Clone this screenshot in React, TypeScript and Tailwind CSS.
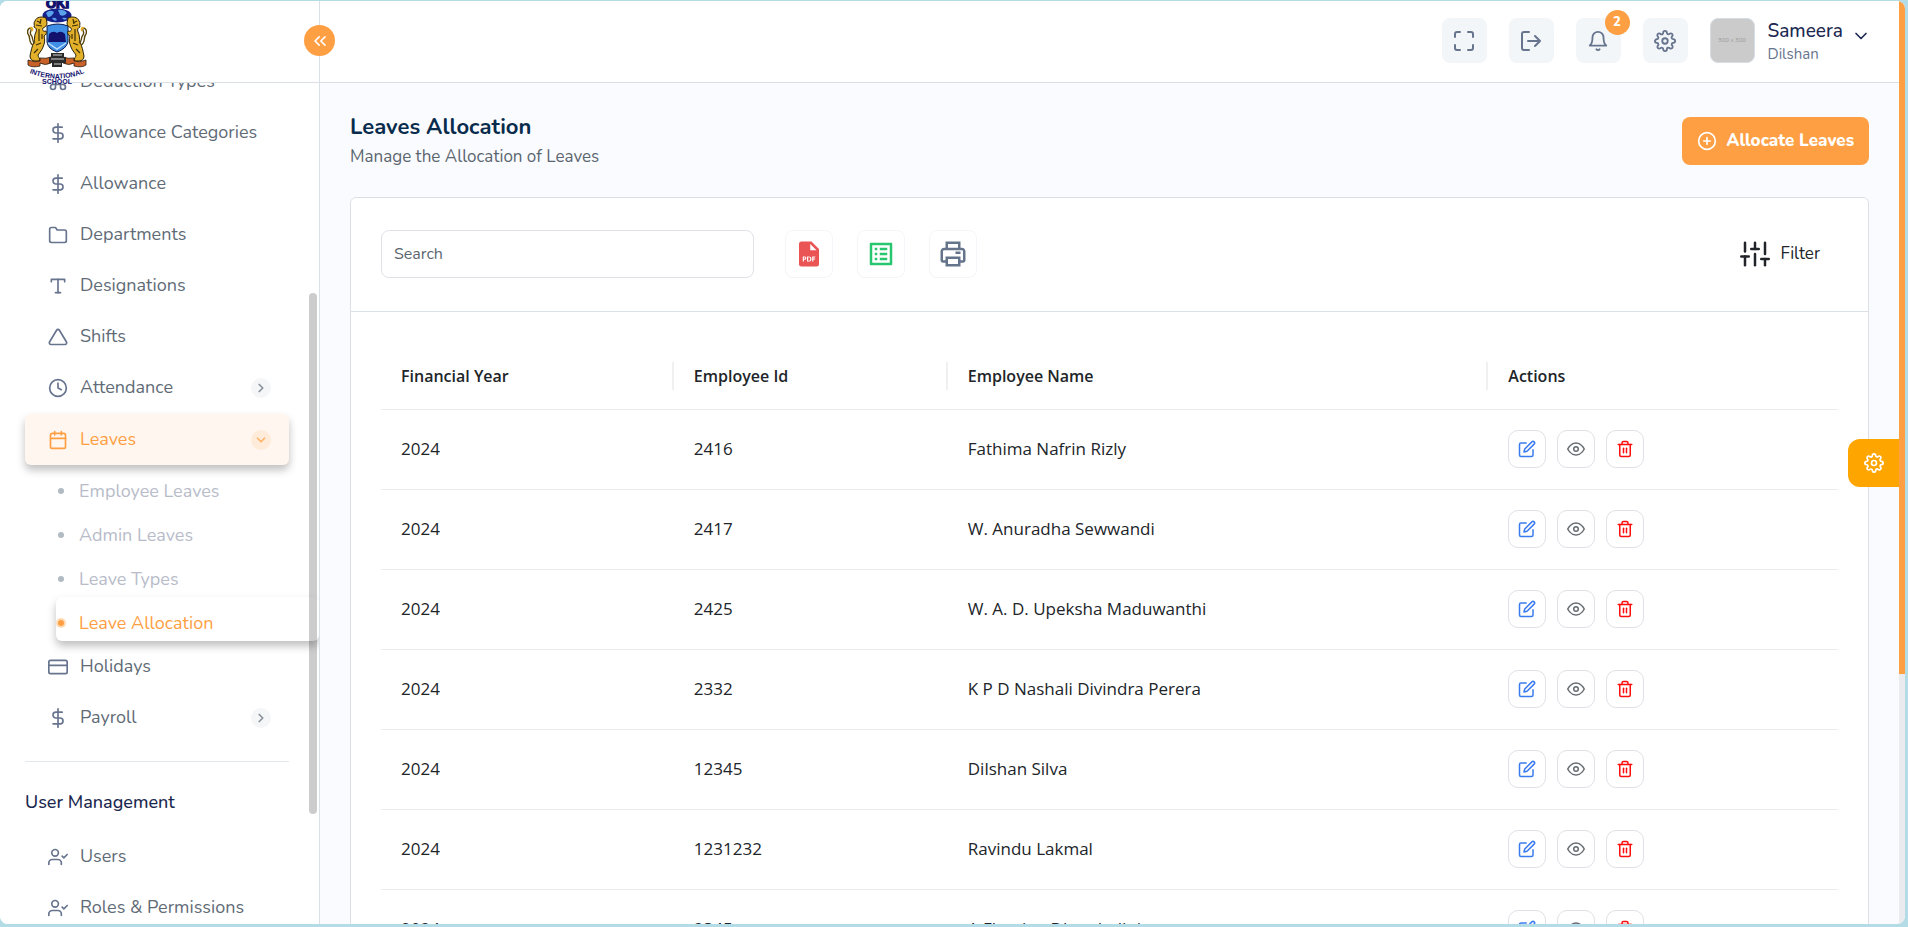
import React from "react";
import {
  FiBell, FiCalendar, FiChevronDown, FiChevronRight, FiChevronsLeft, FiClock, FiCommand, FiCreditCard,
  FiDollarSign, FiEdit, FiEye, FiFolder, FiPlusCircle, FiSettings, FiSliders, FiTrash2, FiTriangle, FiType,
  FiUserCheck,
} from "react-icons/fi";
import { BiPrinter, BiSolidFilePdf } from "react-icons/bi";
import { MdOutlineListAlt } from "react-icons/md";
import type { IconType } from "react-icons";

type NavItem = { label: string; icon: IconType; chevron?: boolean };

const topItems: NavItem[] = [
  { label: "Deduction Types", icon: FiCommand },
  { label: "Allowance Categories", icon: FiDollarSign },
  { label: "Allowance", icon: FiDollarSign },
  { label: "Departments", icon: FiFolder },
  { label: "Designations", icon: FiType },
  { label: "Shifts", icon: FiTriangle },
  { label: "Attendance", icon: FiClock, chevron: true },
];
const leaveItems = ["Employee Leaves", "Admin Leaves", "Leave Types", "Leave Allocation"];
const lowerItems: NavItem[] = [
  { label: "Holidays", icon: FiCreditCard },
  { label: "Payroll", icon: FiDollarSign, chevron: true },
];
const userItems: NavItem[] = [
  { label: "Users", icon: FiUserCheck },
  { label: "Roles & Permissions", icon: FiUserCheck },
];
const allocations = [
  { year: "2024", id: "2416", name: "Fathima Nafrin Rizly" },
  { year: "2024", id: "2417", name: "W. Anuradha Sewwandi" },
  { year: "2024", id: "2425", name: "W. A. D. Upeksha Maduwanthi" },
  { year: "2024", id: "2332", name: "K P D Nashali Divindra Perera" },
  { year: "2024", id: "12345", name: "Dilshan Silva" },
  { year: "2024", id: "1231232", name: "Ravindu Lakmal" },
  { year: "2024", id: "2345", name: "A Fhanina Dharshalini" },
];

function Lion() {
  return (
    <g>
      <path d="M19 17 C15 15 9 16 8 20 C6 22 8 24 7 26 C9 27 10 28 9 31 C7 34 8 38 7 41 C5 45 4 50 3 55 C3 58 5 60 8 60 L13 60 C13 57 11 56 11 54 C13 51 15 49 16 46 C18 42 18 38 17 35 C19 34 20 32 19 30 C16 31 15 29 16 27 C18 26 20 25 20 22 Z" fill="#e3b02a" stroke="#2a2108" strokeWidth="1" />
      <path d="M10 20 L14 22 M9 24 L15 25 M12 28 L12 40 M9 44 L14 42 M7 52 L11 48 M15 33 L15 38 M14 18 L13 23" stroke="#3b2e08" strokeWidth="1.2" fill="none" />
      <path d="M6 44 C1 42 4 36 1 33 C0 30 1 27 4 27 C5 30 2 31 4 34 C7 37 4 40 8 42" fill="none" stroke="#5a460c" strokeWidth="1.4" />
      <path d="M3 27 C5 26 6 28 5 30" fill="none" stroke="#e3b02a" strokeWidth="2" />
    </g>
  );
}

function Logo() {
  return (
    <svg viewBox="0 0 60 84" className="h-[84px] w-[60px]" role="img" aria-label="OKI International School">
      <text x="30.5" y="7" textAnchor="middle" fontFamily="Liberation Sans" fontWeight="700" fontSize="13" fill="#12126e" stroke="#12126e" strokeWidth="1.4">OKI</text>
      <ellipse cx="30" cy="14.5" rx="14.5" ry="7" fill="#15208a" />
      <path d="M19 12 q4 -4 8 -1 q-2 5 -6 5 z M31 9 q6 -1 9 3 q-3 4 -7 2 z M25 17 q4 -1 5 2 q-3 2 -5 -2 z M35 17 q4 -1 5 1 q-3 2 -5 -1z" fill="#5aa2ea" />
      <path d="M20 25 Q31 21 41 25 L41 41 Q39 48 30 51 Q21 48 20 41 Z" fill="#3f8fe6" stroke="#0b1a4d" strokeWidth="1" />
      <path d="M22 33 Q26 29 30 32 Q34 29 38 33 L39 41 L21 41 Z" fill="#12126e" />
      <path d="M21 42 L30 48 L39 42" fill="none" stroke="#bcdcfa" strokeWidth="1.5" />
      <Lion />
      <g transform="translate(60 0) scale(-1 1)"><Lion /></g>
      <path d="M1 59 Q8 62 13 60 L13 57 Q19 58 24 56 L24 62 Q18 65 13 62 L13 65 Q5 67 1 64 Z" fill="#c9622a" stroke="#2b1608" strokeWidth="0.8" />
      <path d="M59 59 Q52 62 47 60 L47 57 Q41 58 36 56 L36 62 Q42 65 47 62 L47 65 Q55 67 59 64 Z" fill="#c9622a" stroke="#2b1608" strokeWidth="0.8" />
      <path d="M24 52 H37 V56 H39 V62 H35 V66 H25 V62 H22 V56 H24 Z" fill="#2b2b2b" />
      <path d="M26 54 H35 M24 58 H37 M27 63 H34" stroke="#d4d4d4" strokeWidth="1" />
      <path id="logo-arc" d="M0 71 Q30 84 60 71" fill="none" />
      <text fontFamily="Liberation Sans" fontWeight="700" fontSize="7" fill="#12126e">
        <textPath href="#logo-arc" startOffset="50%" textAnchor="middle">INTERNATIONAL</textPath>
      </text>
      <text x="30" y="83" textAnchor="middle" fontFamily="Liberation Sans" fontWeight="700" fontSize="7" fill="#12126e">SCHOOL</text>
    </svg>
  );
}

function NavLink({ item }: { item: NavItem }) {
  const Icon = item.icon;
  return (
    <a href="#" className="flex h-[51px] items-center gap-3 pr-[18px] pl-[23px] text-[18px] text-[#5f6b76]">
      <Icon className="size-5 text-[#67748e]" />
      <span className="flex-1">{item.label}</span>
      {item.chevron && (
        <span className="flex size-5 items-center justify-center rounded-full bg-[#f5f6f8]">
          <FiChevronRight className="size-[14px] text-[#8b929a]" strokeWidth={3} />
        </span>
      )}
    </a>
  );
}

function HeaderButton({ label, children }: { label: string; children: React.ReactNode }) {
  return (
    <button type="button" aria-label={label} className="relative flex size-[45px] items-center justify-center rounded-lg bg-[#f2f6f9] text-[#67748e]">
      {children}
    </button>
  );
}

function Sidebar() {
  return (
    <aside className="relative flex w-80 shrink-0 flex-col border-r border-[#dbe0e6] bg-white">
      <div className="relative z-10 h-[82px] shrink-0 border-b border-[#dbe0e6] bg-white pl-[27px]">
        <Logo />
      </div>
      <button type="button" aria-label="Collapse sidebar" className="absolute top-6 -right-4 z-20 flex size-[31px] items-center justify-center rounded-full bg-[#fe9f43] text-white">
        <FiChevronsLeft className="size-5" />
      </button>
      <nav className="min-h-0 flex-1 overflow-hidden">
        <div className="-mt-[27px] pr-[30px] pl-[25px]">
          {topItems.map((item) => <NavLink key={item.label} item={item} />)}
          <a href="#" className="mt-px flex h-[51px] items-center gap-3 rounded-md bg-[#fff6ef] pr-[18px] pl-[23px] text-[18px] text-[#fe9f43] shadow-[0_5px_9px_rgba(0,0,0,0.25)]">
            <FiCalendar className="size-5" />
            <span className="flex-1">Leaves</span>
            <span className="flex size-5 items-center justify-center rounded-full bg-[#ffebd9]">
              <FiChevronDown className="size-[14px] text-[#feb469]" strokeWidth={3} />
            </span>
          </a>
          <ul className="-mr-[30px] pl-[31px] text-[18px]">
            {leaveItems.map((label) => {
              const active = label === "Leave Allocation";
              return (
                <li key={label}>
                  <a
                    href="#"
                    className={
                      active
                        ? "flex h-11 items-center gap-[14px] rounded-md bg-white pt-2 pl-px text-[#fe9f43] shadow-[0_5px_9px_rgba(0,0,0,0.25)]"
                        : "flex h-11 items-center gap-[14px] pt-2 pl-px text-[#b8bcc9]"
                    }
                  >
                    <span className={active ? "m-px size-1.5 rounded-full bg-[#fe9f43] ring-2 ring-[#ffdcb8]" : "m-px size-1.5 rounded-full bg-[#b2bac2]"} />
                    <span>{label}</span>
                  </a>
                </li>
              );
            })}
          </ul>
          {lowerItems.map((item) => <NavLink key={item.label} item={item} />)}
          <hr className="mt-[18px] border-[#e2e8ee]" />
          <h2 className="mt-7 mb-[17px] text-[18px] leading-6 font-medium text-[#1b2850]">User Management</h2>
          {userItems.map((item) => <NavLink key={item.label} item={item} />)}
        </div>
      </nav>
      <div className="absolute top-[292px] right-[2px] h-[521px] w-2 rounded-full bg-black/20" />
    </aside>
  );
}

function Header() {
  return (
    <header className="flex h-[82px] shrink-0 items-start justify-end gap-[22px] border-b border-[#dbe0e6] bg-white pt-[17px] pr-8">
      <HeaderButton label="Full screen">
        <svg viewBox="0 0 24 24" className="size-6" fill="none" stroke="currentColor" strokeWidth="2" strokeLinecap="round" strokeLinejoin="round">
          <path d="M3 8V5a2 2 0 0 1 2-2h3M16 3h3a2 2 0 0 1 2 2v3M21 16v3a2 2 0 0 1-2 2h-3M8 21H5a2 2 0 0 1-2-2v-3" />
        </svg>
      </HeaderButton>
      <HeaderButton label="Log out">
        <svg viewBox="0 0 24 24" className="size-6" fill="none" stroke="currentColor" strokeWidth="2" strokeLinecap="round" strokeLinejoin="round">
          <path d="M10 3H5a2 2 0 0 0-2 2v14a2 2 0 0 0 2 2h5M9 12h12M16 7l5 5-5 5" />
        </svg>
      </HeaderButton>
      <HeaderButton label="Notifications">
        <FiBell className="size-[22px]" />
        <span className="absolute -top-2 -right-[9px] flex size-[25px] items-center justify-center rounded-full bg-[#fe9f43] text-[13px] font-extrabold text-white">2</span>
      </HeaderButton>
      <HeaderButton label="Settings">
        <FiSettings className="size-[22px]" />
      </HeaderButton>
      <button type="button" className="flex items-start text-left">
        <span className="flex size-[45px] items-center justify-center rounded-lg border border-[#d5dde5] bg-[#cbcbcb] text-[6px] text-[#9a9a9a]">300 x 300</span>
        <span className="ml-[13px] flex flex-col pt-px">
          <span className="text-[19px] leading-6 font-medium text-[#1b2850]">Sameera</span>
          <span className="text-[15px] leading-[22px] text-[#67748e]">Dilshan</span>
        </span>
        <FiChevronDown className="mt-2 -mr-1 ml-2 size-5 text-[#1b2850]" />
      </button>
    </header>
  );
}

const actionButton = "flex size-[38px] items-center justify-center rounded-[10px] border border-[#e0e1e6]";

function AllocationTable() {
  return (
    <table className="w-full table-fixed border-collapse text-left font-['Segoe_UI','Open_Sans',sans-serif] text-[17px] text-[#212529]">
      <thead>
        <tr className="h-[66px] border-b border-[#ececec] text-[16px]">
          <th className="w-[20.1%] p-0 font-semibold"><div className="flex h-7 items-center border-r-2 border-[#f0f0f0] pl-5">Financial Year</div></th>
          <th className="w-[18.8%] p-0 font-semibold"><div className="flex h-7 items-center border-r-2 border-[#f0f0f0] pl-5">Employee Id</div></th>
          <th className="w-[37.1%] p-0 font-semibold"><div className="flex h-7 items-center border-r-2 border-[#f0f0f0] pl-5">Employee Name</div></th>
          <th className="p-0 pl-5 font-semibold">Actions</th>
        </tr>
      </thead>
      <tbody>
        {allocations.map((row) => (
          <tr key={row.id} className="h-20 border-b border-[#ececec]">
            <td className="pl-5">{row.year}</td>
            <td className="pl-5">{row.id}</td>
            <td className="pl-5">{row.name}</td>
            <td className="pl-5">
              <div className="flex gap-[11px]">
                <button type="button" aria-label={"Edit " + row.name} className={actionButton}><FiEdit className="size-[18px] text-[#3b7bf0]" /></button>
                <button type="button" aria-label={"View " + row.name} className={actionButton}><FiEye className="size-[18px] text-[#646b72]" /></button>
                <button type="button" aria-label={"Delete " + row.name} className={actionButton}><FiTrash2 className="size-[18px] text-[#ff0f0f]" /></button>
              </div>
            </td>
          </tr>
        ))}
      </tbody>
    </table>
  );
}

const exportButton = "flex size-12 items-center justify-center rounded-lg border border-[#f3f5f8]";

export default function App() {
  return (
    <div className="h-screen overflow-hidden bg-[#b3dce6] pt-px pr-[3px] pb-[3px] font-['Nunito','Open_Sans',sans-serif]">
      <div className="relative flex h-full overflow-hidden rounded-lg bg-[#fafbfe]">
        <Sidebar />
        <div className="flex min-w-0 flex-1 flex-col">
          <Header />
          <main className="min-h-0 flex-1 overflow-hidden px-[30px]">
            <div className="flex items-center justify-between pt-[29px] pb-7">
              <div>
                <h1 className="text-[22px] leading-[30px] font-bold text-[#092c4c]">Leaves Allocation</h1>
                <p className="mt-[3px] text-[17px] leading-6 text-[#5b6670]">Manage the Allocation of Leaves</p>
              </div>
              <button type="button" className="flex h-12 items-center gap-[10px] rounded-lg bg-[#fe9f43] px-[15px] text-[17px] font-extrabold text-white">
                <FiPlusCircle className="size-5" />
                Allocate Leaves
              </button>
            </div>
            <section className="rounded-md border border-[#dbe0e6] bg-white">
              <div className="flex items-center justify-between border-b border-[#dbe0e6] px-[30px] pt-8 pb-[33px]">
                <div className="flex items-center gap-[31px]">
                  <input type="search" aria-label="Search" placeholder="Search" className="h-12 w-[373px] rounded-lg border border-[#e0e1e6] px-3 text-[16px] outline-none placeholder:text-[#5b6670]" />
                  <div className="flex gap-6">
                    <button type="button" aria-label="Export PDF" className={exportButton}><BiSolidFilePdf className="size-[30px] text-[#ea5455]" /></button>
                    <button type="button" aria-label="Export spreadsheet" className={exportButton}><MdOutlineListAlt className="size-[30px] text-[#28c76f]" /></button>
                    <button type="button" aria-label="Print" className={exportButton}><BiPrinter className="size-[30px] text-[#64748b]" /></button>
                  </div>
                </div>
                <button type="button" className="mr-[18px] flex items-center gap-[11px] text-[17px] text-[#212529]">
                  <FiSliders className="size-[30px]" />
                  Filter
                </button>
              </div>
              <div className="px-[30px] pt-[31px]">
                <AllocationTable />
              </div>
            </section>
          </main>
        </div>
        <div className="w-1.5 shrink-0 bg-[#e9ebee]">
          <div className="h-[673px] bg-[#fe9f43]" />
        </div>
        <button type="button" aria-label="Theme settings" className="absolute top-[438px] right-1.5 flex h-12 w-[51px] items-center justify-center rounded-l-xl bg-[#ffa500] text-white">
          <FiSettings className="size-5" />
        </button>
      </div>
    </div>
  );
}
